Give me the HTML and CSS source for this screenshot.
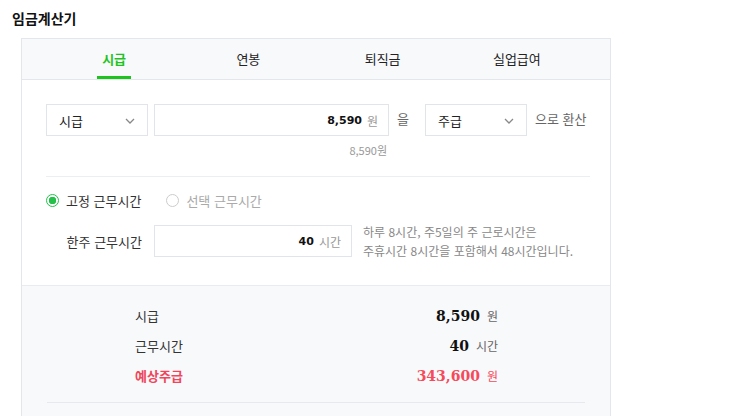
FILE: index.html
```html
<!DOCTYPE html>
<html lang="ko">
<head>
<meta charset="utf-8">
<link rel="stylesheet" href="styles.css">
</head>
<body>
<h1 class="title">임금계산기</h1>
<div class="card">
  <div class="tabs">
    <div class="tab active"><span>시급</span></div>
    <div class="tab"><span>연봉</span></div>
    <div class="tab"><span>퇴직금</span></div>
    <div class="tab"><span>실업급여</span></div>
  </div>
  <div class="form">
    <div class="row">
      <div class="select"><span>시급</span>
        <svg class="chev" width="10" height="6" viewBox="0 0 10 6"><path d="M1 1 L5 5 L9 1" fill="none" stroke="#888" stroke-width="1.3"/></svg>
      </div>
      <div class="input wide"><b class="num">8,590</b><span class="unit">원</span></div>
      <span class="word">을</span>
      <div class="select"><span>주급</span>
        <svg class="chev" width="10" height="6" viewBox="0 0 10 6"><path d="M1 1 L5 5 L9 1" fill="none" stroke="#888" stroke-width="1.3"/></svg>
      </div>
      <span class="word">으로 환산</span>
    </div>
    <div class="hint">8,590원</div>
    <div class="divider"></div>
    <div class="radios">
      <label class="radio on"><span class="dot"></span>고정 근무시간</label>
      <label class="radio off"><span class="dot"></span>선택 근무시간</label>
    </div>
    <div class="row hours">
      <span class="label">한주 근무시간</span>
      <div class="input short"><b class="num">40</b><span class="unit">시간</span></div>
      <p class="help">하루 8시간, 주5일의 주 근로시간은<br>주휴시간 8시간을 포함해서 48시간입니다.</p>
    </div>
  </div>
  <div class="result">
    <div class="rrow"><span class="rlabel">시급</span><span class="rval"><b>8,590</b><span class="runit">원</span></span></div>
    <div class="rrow"><span class="rlabel">근무시간</span><span class="rval"><b>40</b><span class="runit">시간</span></span></div>
    <div class="rrow red"><span class="rlabel">예상주급</span><span class="rval"><b>343,600</b><span class="runit">원</span></span></div>
    <div class="rline"></div>
  </div>
</div>
</body>
</html>
```
FILE: styles.css
```css
* { box-sizing: border-box; }
body {
  margin: 0;
  background: #fff;
  font-family: "Noto Sans CJK KR", "Noto Sans", sans-serif;
  color: #333;
  font-size: 13px;
}
.title {
  margin: 0;
  padding: 8px 0 0 12px;
  height: 38px;
  font-size: 14px;
  font-weight: 700;
  color: #111;
  line-height: 20px;
}
.card {
  margin-left: 21px;
  width: 590px;
  border: 1px solid #e3e7ec;
  border-bottom: none;
  height: 378px;
  overflow: hidden;
}
.tabs {
  display: flex;
  padding: 0 26px 0 25px;
  background: #f8f9fb;
  border-bottom: 1px solid #e3e7ec;
  height: 41px;
}
.tab {
  flex: 1;
  display: flex;
  justify-content: center;
}
.tab span {
  display: block;
  height: 40px;
  line-height: 40px;
  font-size: 13px;
  color: #222;
}
.tab.active span {
  color: #1ec31e;
  font-weight: 700;
  border-bottom: 3px solid #1ec31e;
  line-height: 40px;
  padding: 0 5px;
}
.form {
  padding: 24px 20px 0 24px;
}
.row {
  display: flex;
  align-items: center;
}
.row > * { flex-shrink: 0; }
.select {
  width: 102px;
  height: 32px;
  border: 1px solid #e1e5ea;
  display: flex;
  align-items: center;
  justify-content: space-between;
  padding: 0 12px 0 12px;
  font-size: 13px;
  color: #222;
}
.chev { margin-top: 1px; }
.input {
  height: 32px;
  border: 1px solid #e1e5ea;
  display: flex;
  align-items: center;
  justify-content: flex-end;
  padding: 0 10px;
  margin-left: 6px;
}
.input.wide { width: 235px; }
.input.short { width: 198px; margin-left: 12px; }
.num {
  font-family: "DejaVu Sans", sans-serif;
  font-weight: 700;
  font-size: 11px;
  color: #111;
}
.unit {
  margin-left: 5px;
  color: #999;
  font-size: 12px;
}
.word {
  color: #666;
  font-size: 13px;
  line-height: 16px;
  margin: -2px 8px 0 8px;
  white-space: nowrap;
}
.word + .select { margin-left: 8px; }
.hint {
  width: 341px;
  text-align: right;
  font-size: 11px;
  color: #999;
  margin-top: 6px;
  line-height: 16px;
}
.divider {
  height: 1px;
  background: #eceff2;
  margin-top: 18px;
  width: 544px;
}
.radios {
  display: flex;
  gap: 25px;
  margin-top: 15px;
  height: 16px;
  align-items: center;
}
.radio {
  display: flex;
  align-items: center;
  font-size: 13px;
  color: #333;
}
.radio.off { color: #aaa; }
.dot {
  width: 13px;
  height: 13px;
  border-radius: 50%;
  border: 1px solid #ccc;
  margin-right: 7px;
  background: #fff;
}
.radio.on .dot {
  border-color: #24c14a;
  background: radial-gradient(circle, #24c14a 0 3.5px, #fff 4px);
}
.hours { margin-top: 14px; }
.label {
  width: 96px;
  text-align: right;
  font-size: 13px;
  color: #333;
}
.help {
  margin: 0 0 0 11px;
  font-size: 12px;
  color: #888;
  line-height: 19px;
}
.result {
  margin-top: 25px;
  background: #f8f9fb;
  border-top: 1px solid #e8ebef;
  padding-top: 14px;
  height: 200px;
}
.rrow {
  display: flex;
  justify-content: space-between;
  align-items: center;
  height: 30px;
  padding: 0 112px 0 113px;
}
.rlabel { font-size: 13px; color: #333; }
.rval { display: flex; align-items: baseline; }
.rval b {
  font-family: "DejaVu Serif", serif;
  font-weight: 700;
  font-size: 14px;
  color: #111;
}
.runit {
  margin-left: 7px;
  font-size: 12px;
  color: #666;
}
.red .rlabel { color: #f0455a; font-weight: 700; }
.red .rval b, .red .runit { color: #f64a5a; }
.rline {
  margin: 12px 25px 0 25px;
  height: 1px;
  background: #e6e9ed;
}
```
